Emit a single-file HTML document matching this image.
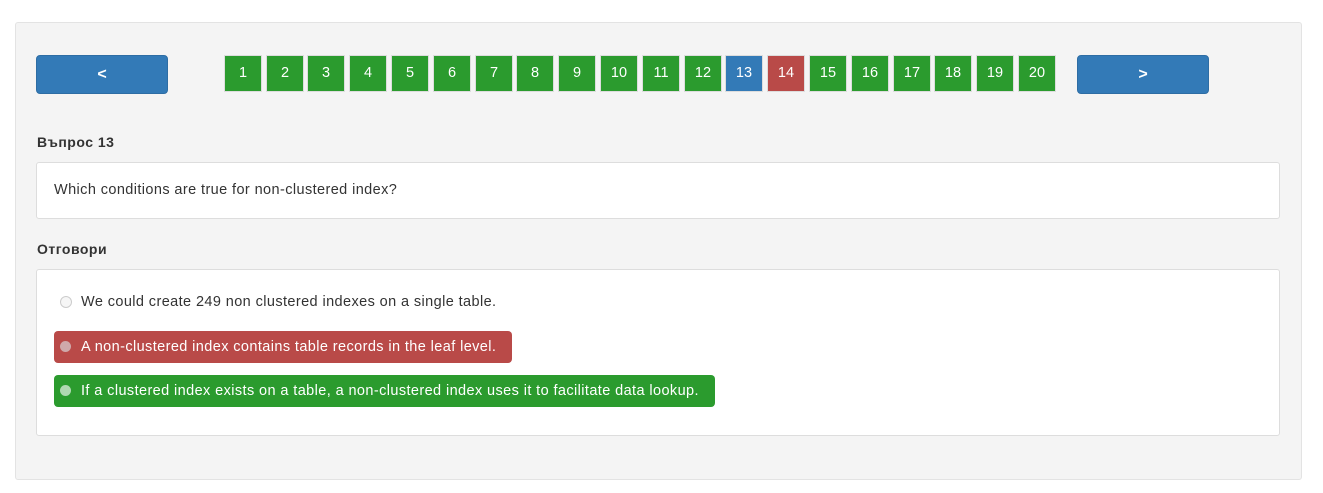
<!DOCTYPE html><html><head><style>
body{margin:0;background:#fff;font-family:"Liberation Sans",Arial,sans-serif;width:1323px;height:493px;position:relative;color:#333}
.wrap{position:absolute;left:15px;top:22px;width:1285px;height:456px;background:#f4f4f4;border:1px solid #e3e3e3;border-radius:3px}
.nav{position:absolute;top:55px;width:130px;height:37px;background:#337ab7;border:1px solid #2e6da4;border-radius:4px;color:#fff;font-weight:bold;font-size:16px;text-align:center;line-height:37px}
.p{position:absolute;top:55px;width:36px;height:35px;border:1px solid #ddd;color:#fff;font-size:14.5px;text-align:center;line-height:35px;background:#2b9b2e}
.lbl{position:absolute;left:37px;font-weight:bold;font-size:14px;letter-spacing:0.5px}
.box{position:absolute;left:36px;width:1242px;background:#fff;border:1px solid #ddd;border-radius:3px}
.a{position:absolute;left:54px;height:32px;line-height:32px;font-size:14.5px;letter-spacing:0.4px;border-radius:4px;padding:0 16px 0 27px;color:#fff}
.a i{position:absolute;left:6px;top:10px;width:11px;height:11px;border-radius:50%}
</style></head><body>
<div class="wrap"></div>
<div class="nav" style="left:36px">&lt;</div>
<div class="nav" style="left:1077px">&gt;</div>
<div class="p" style="left:224px">1</div><div class="p" style="left:266px">2</div><div class="p" style="left:307px">3</div><div class="p" style="left:349px">4</div><div class="p" style="left:391px">5</div><div class="p" style="left:433px">6</div><div class="p" style="left:475px">7</div><div class="p" style="left:516px">8</div><div class="p" style="left:558px">9</div><div class="p" style="left:600px">10</div><div class="p" style="left:642px">11</div><div class="p" style="left:684px">12</div><div class="p" style="left:725px;background:#337ab7">13</div><div class="p" style="left:767px;background:#b94a48">14</div><div class="p" style="left:809px">15</div><div class="p" style="left:851px">16</div><div class="p" style="left:893px">17</div><div class="p" style="left:934px">18</div><div class="p" style="left:976px">19</div><div class="p" style="left:1018px">20</div>
<div class="lbl" style="top:134px">Въпрос 13</div>
<div class="box" style="top:162px;height:55px"><div style="position:absolute;left:17px;top:19px;font-size:14.5px;letter-spacing:0.4px">Which conditions are true for non-clustered index?</div></div>
<div class="lbl" style="top:241px">Отговори</div>
<div class="box" style="top:269px;height:165px"></div>
<div class="a" style="top:286px;color:#333"><i style="border:1px solid #ccc;width:10px;height:10px;background:#f6f6f6"></i>We could create 249 non clustered indexes on a single table.</div>
<div class="a" style="top:331px;background:#b94a48"><i style="background:#cfa9aa"></i>A non-clustered index contains table records in the leaf level.</div>
<div class="a" style="top:375px;background:#2b9b2e"><i style="background:#b0d8b1"></i>If a clustered index exists on a table, a non-clustered index uses it to facilitate data lookup.</div>
</body></html>
